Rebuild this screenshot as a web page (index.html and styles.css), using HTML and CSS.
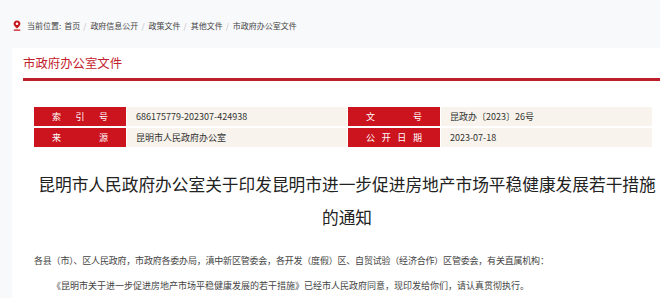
FILE: index.html
```html
<!DOCTYPE html>
<html lang="zh-CN">
<head>
  <meta charset="UTF-8">
  <title>市政府办公室文件</title>
  <link rel="stylesheet" href="styles.css">
</head>
<body>

<div class="crumb">
  <svg class="pin" width="8" height="11" viewBox="0 0 8 11">
    <path d="M4 0.5C2 0.5 0.6 1.9 0.6 3.8C0.6 5.8 4 8.6 4 8.6C4 8.6 7.4 5.8 7.4 3.8C7.4 1.9 6 0.5 4 0.5Z" fill="#c8161d"/>
    <circle cx="4" cy="3.7" r="1.3" fill="#fff"/>
    <rect x="0.5" y="9.4" width="7" height="1.4" rx="0.7" fill="#c8161d"/>
  </svg>
  <span>当前位置:</span>
  <a>首页</a><i>/</i>
  <a>政府信息公开</a><i>/</i>
  <a>政策文件</a><i>/</i>
  <a>其他文件</a><i>/</i>
  <a>市政府办公室文件</a>
</div>

<div class="main">
  <h2 class="column-title">市政府办公室文件</h2>

  <div class="meta">
    <div class="label">索引号</div>
    <div class="value">686175779-202307-424938</div>
    <div class="label">文号</div>
    <div class="value">昆政办〔2023〕26号</div>
    <div class="label">来源</div>
    <div class="value">昆明市人民政府办公室</div>
    <div class="label">公开日期</div>
    <div class="value">2023-07-18</div>
  </div>

  <h1 class="doc-title">昆明市人民政府办公室关于印发昆明市进一步促进房地产市场平稳健康发展若干措施的通知</h1>

  <div class="doc-body">
    <p class="first">各县（市）、区人民政府，市政府各委办局，滇中新区管委会，各开发（度假）区、自贸试验（经济合作）区管委会，有关直属机构：</p>
    <p>《昆明市关于进一步促进房地产市场平稳健康发展的若干措施》已经市人民政府同意，现印发给你们，请认真贯彻执行。</p>
  </div>
</div>

</body>
</html>
```

FILE: styles.css
```css
body {
  margin: 0;
  background: #f8f9fb;
  font-family: "Noto Sans CJK SC", "Noto Sans", sans-serif;
  color: #333;
  height: 298px;
  overflow: hidden;
}
.crumb {
  height: 48px;
  box-sizing: border-box;
  padding: 20px 0 0 13px;
  display: flex;
  align-items: flex-start;
  font-size: 8px;
  line-height: 11px;
  color: #444;
}
.crumb .pin {
  margin-right: 6px;
}
.crumb span {
  margin-right: 3px;
}
.crumb i {
  font-style: normal;
  color: #bbb;
  padding: 0 4px 0 3px;
}
.main {
  margin-left: 12px;
  background: #fff;
  padding-left: 11px;
  height: 250px;
}
.column-title {
  margin: 0;
  padding: 7px 0 6px;
  font-size: 12.4px;
  line-height: 17px;
  font-weight: normal;
  color: #c3222c;
  border-bottom: 3px solid #bd1f2b;
}
.meta {
  margin: 26px 0 0 11px;
  display: grid;
  grid-template-columns: 92px 220px 92px 211px;
  column-gap: 1px;
  row-gap: 2px;
  font-size: 9px;
  line-height: 19px;
}
.meta .label {
  background: #cc141e;
  color: #fff;
  padding: 0 18px;
  text-align: justify;
  text-align-last: justify;
}
.meta .value {
  background: #f8f3ec;
  padding-left: 9px;
  color: #333;
}
.doc-title {
  margin: 21px 0 0 11px;
  font-size: 16.7px;
  line-height: 33px;
  font-weight: normal;
  text-align: center;
  color: #222;
}
.doc-body {
  margin: 14px 0 0 11px;
  font-size: 9px;
  line-height: 25px;
  color: #444;
}
.doc-body p {
  margin: 0;
  text-indent: 2em;
}
.doc-body p.first {
  text-indent: 0;
  letter-spacing: -0.2px;
}
```
